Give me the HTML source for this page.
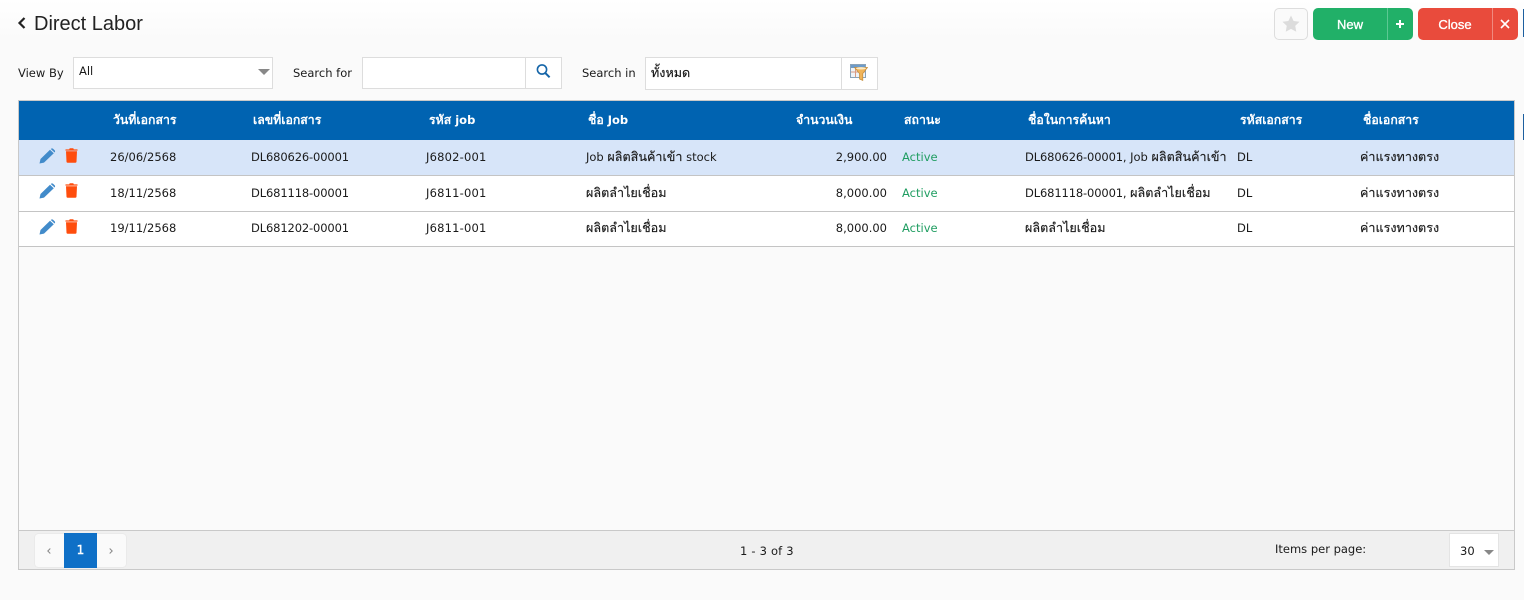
<!DOCTYPE html>
<html lang="th"><head><meta charset="utf-8"><title>Direct Labor</title>
<style>
html,body{margin:0;padding:0;width:1524px;height:600px;overflow:hidden}
body{background:#fafafa;position:relative;font:11.5px "DejaVu Sans","Liberation Sans","Noto Sans CJK SC",sans-serif;color:#1a1a1a}
.a{position:absolute;white-space:nowrap}
.box{position:absolute;box-sizing:border-box;background:#fff;border:1px solid #ddd}
.t{position:absolute;white-space:nowrap;line-height:16px}
.h{color:#fff;font-weight:bold;top:112px}
.row{position:absolute;left:19px;width:1495px;box-sizing:border-box;border-bottom:1px solid #c4c4c4}
.g{color:#1f9d61}
.r{text-align:right}
.th{font-size:12.6px;-webkit-text-stroke:.15px #1a1a1a}
.h .th{font-size:12.3px;-webkit-text-stroke:0}
.tg{letter-spacing:-.14px}
.tj{letter-spacing:.2px}
svg{position:absolute;display:block}
</style></head><body>
<div class="a" style="left:0;top:0;width:1524px;height:40px;background:linear-gradient(#fff,#fafafa)"></div>
<svg style="left:17px;top:16px" width="10" height="14" viewBox="0 0 10 14"><path d="M7.5 2 L2.5 7 L7.5 12" fill="none" stroke="#222" stroke-width="2.2"/></svg>
<div class="a" style="left:34px;top:12px;font:20px/25px 'Liberation Sans',sans-serif;color:#222">Direct Labor</div>

<div class="a" style="left:1274px;top:8px;width:34px;height:32px;box-sizing:border-box;background:#fafafa;border:1px solid #ddd;border-radius:5px"></div>
<svg style="left:1282px;top:15px" width="18" height="17" viewBox="0 0 18 17"><path d="M9 0.5 L11.6 6 L17.5 6.8 L13.2 10.9 L14.3 16.8 L9 13.9 L3.7 16.8 L4.8 10.9 L0.5 6.8 L6.4 6 Z" fill="#dcdcdc"/></svg>
<div class="a" style="left:1313px;top:8px;width:100px;height:32px;background:#21b068;border-radius:5px"></div>
<div class="a" style="left:1387px;top:8px;width:1px;height:32px;background:#5cc893"></div>
<div class="a" style="left:1313px;top:8px;width:74px;height:32px;text-align:center;color:#fff;font:13px/33px 'Liberation Sans',sans-serif;-webkit-text-stroke:.35px #fff">New</div>
<svg style="left:1395px;top:19px" width="10" height="10" viewBox="0 0 10 10"><path d="M5 1 V9 M1 5 H9" stroke="#fff" stroke-width="2"/></svg>
<div class="a" style="left:1418px;top:8px;width:100px;height:32px;background:#e94b3c;border-radius:5px"></div>
<div class="a" style="left:1492px;top:8px;width:1px;height:32px;background:#f08a80"></div>
<div class="a" style="left:1418px;top:8px;width:74px;height:32px;text-align:center;color:#fff;font:13px/33px 'Liberation Sans',sans-serif;-webkit-text-stroke:.35px #fff">Close</div>
<svg style="left:1500px;top:19px" width="10" height="10" viewBox="0 0 10 10"><path d="M1 1 L9 9 M9 1 L1 9" stroke="#fff" stroke-width="1.6"/></svg>
<div class="a" style="left:1523px;top:9px;width:1px;height:28px;background:#1d5f9f"></div>
<div class="a" style="left:1523px;top:114px;width:1px;height:26px;background:#1d5f9f"></div>

<div class="t" style="left:18px;top:65px">View By</div>
<div class="box" style="left:73px;top:57px;width:200px;height:32px"></div>
<div class="t" style="left:79px;top:63px">All</div>
<svg style="left:258px;top:69px" width="12" height="6" viewBox="0 0 12 6"><path d="M0 0 H12 L6 6 Z" fill="#888"/></svg>

<div class="t" style="left:293px;top:65px">Search for</div>
<div class="box" style="left:362px;top:57px;width:200px;height:32px"></div>
<div class="a" style="left:525px;top:58px;width:1px;height:30px;background:#ddd"></div>
<svg style="left:535px;top:63px" width="17" height="17" viewBox="0 0 17 17"><circle cx="7" cy="6.5" r="4.6" fill="none" stroke="#1565a8" stroke-width="1.6"/><path d="M10.3 10 L14.6 14.3" stroke="#1565a8" stroke-width="2"/></svg>

<div class="t" style="left:582px;top:65px">Search in</div>
<div class="box" style="left:645px;top:57px;width:233px;height:33px"></div>
<div class="a" style="left:841px;top:58px;width:1px;height:31px;background:#ddd"></div>
<div class="t th" style="left:651px;top:65px;color:#111">ทั้งหมด</div>
<svg style="left:850px;top:64px" width="18" height="18" viewBox="0 0 18 18"><rect x="0.5" y="0.5" width="15" height="13" fill="#eef3f7" stroke="#8aa3b8"/><rect x="1" y="1" width="14" height="3" fill="#6d9bc9"/><path d="M1 8 H15 M5.5 4 V13" stroke="#d99a80"/><path d="M4.5 3.5 H17.5 L12.8 9.5 V16.5 L9.5 15 V9.5 Z" fill="#f0b45a" stroke="#c48a35" stroke-width=".7"/><ellipse cx="11" cy="4.3" rx="5" ry="1.2" fill="#fbeac4"/></svg>

<!-- grid -->
<div class="a" style="left:18px;top:100px;width:1497px;height:470px;box-sizing:border-box;border:1px solid #c9c9c9;background:#fafafa"></div>
<div class="a" style="left:19px;top:101px;width:1495px;height:39px;background:#0063b1"></div>
<div class="t h" style="left:113px"><span class="th">วันที่เอกสาร</span></div>
<div class="t h" style="left:253px"><span class="th">เลขที่เอกสาร</span></div>
<div class="t h" style="left:429px"><span class="th">รหัส</span> job</div>
<div class="t h" style="left:588px"><span class="th">ชื่อ</span> Job</div>
<div class="t h" style="left:796px"><span class="th">จำนวนเงิน</span></div>
<div class="t h" style="left:904px"><span class="th">สถานะ</span></div>
<div class="t h" style="left:1028px"><span class="th">ชื่อในการค้นหา</span></div>
<div class="t h" style="left:1240px"><span class="th">รหัสเอกสาร</span></div>
<div class="t h" style="left:1363px"><span class="th">ชื่อเอกสาร</span></div>

<div class="row" style="top:140px;height:36px;background:#d7e5f9"></div>
<div class="row" style="top:176px;height:36px;background:#fff"></div>
<div class="row" style="top:212px;height:35px;background:#fff"></div>

<svg style="left:39px;top:148px" width="17" height="16" viewBox="0 0 17 16"><path d="M0.5 15.5 L1.5 11 L11 1.8 L14.8 5.3 L5 14.6 Z M11.8 1 Q13 -0.2 14.2 0.9 L15.6 2.3 Q16.6 3.4 15.6 4.5 Z" fill="#428bca"/></svg>
<svg style="left:65px;top:148px" width="13" height="15" viewBox="0 0 13 15"><path d="M0.5 1.4 H4.2 L4.7 0.3 H8.3 L8.8 1.4 H12.5 V2.6 H0.5 Z M1 3.2 H12 L11.5 13.8 Q11.4 14.8 10.4 14.8 H2.6 Q1.6 14.8 1.5 13.8 Z" fill="#ff4d0d"/></svg>
<svg style="left:39px;top:183px" width="17" height="16" viewBox="0 0 17 16"><path d="M0.5 15.5 L1.5 11 L11 1.8 L14.8 5.3 L5 14.6 Z M11.8 1 Q13 -0.2 14.2 0.9 L15.6 2.3 Q16.6 3.4 15.6 4.5 Z" fill="#428bca"/></svg>
<svg style="left:65px;top:183px" width="13" height="15" viewBox="0 0 13 15"><path d="M0.5 1.4 H4.2 L4.7 0.3 H8.3 L8.8 1.4 H12.5 V2.6 H0.5 Z M1 3.2 H12 L11.5 13.8 Q11.4 14.8 10.4 14.8 H2.6 Q1.6 14.8 1.5 13.8 Z" fill="#ff4d0d"/></svg>
<svg style="left:39px;top:219px" width="17" height="16" viewBox="0 0 17 16"><path d="M0.5 15.5 L1.5 11 L11 1.8 L14.8 5.3 L5 14.6 Z M11.8 1 Q13 -0.2 14.2 0.9 L15.6 2.3 Q16.6 3.4 15.6 4.5 Z" fill="#428bca"/></svg>
<svg style="left:65px;top:219px" width="13" height="15" viewBox="0 0 13 15"><path d="M0.5 1.4 H4.2 L4.7 0.3 H8.3 L8.8 1.4 H12.5 V2.6 H0.5 Z M1 3.2 H12 L11.5 13.8 Q11.4 14.8 10.4 14.8 H2.6 Q1.6 14.8 1.5 13.8 Z" fill="#ff4d0d"/></svg>

<div class="t" style="left:110px;top:149px">26/06/2568</div>
<div class="t tg" style="left:251px;top:149px">DL680626-00001</div>
<div class="t tj" style="left:426px;top:149px">J6802-001</div>
<div class="t" style="left:586px;top:149px">Job <span class="th">ผลิตสินค้าเข้า</span> stock</div>
<div class="t r" style="left:787px;width:100px;top:149px">2,900.00</div>
<div class="t g" style="left:902px;top:149px">Active</div>
<div class="t" style="left:1025px;top:149px;width:204px;overflow:hidden"><span class="tg">DL680626-00001,</span> Job <span class="th">ผลิตสินค้าเข้า</span></div>
<div class="t" style="left:1237px;top:149px">DL</div>
<div class="t th" style="left:1360px;top:149px">ค่าแรงทางตรง</div>

<div class="t" style="left:110px;top:185px">18/11/2568</div>
<div class="t tg" style="left:251px;top:185px">DL681118-00001</div>
<div class="t tj" style="left:426px;top:185px">J6811-001</div>
<div class="t th" style="left:586px;top:185px">ผลิตลำไยเชื่อม</div>
<div class="t r" style="left:787px;width:100px;top:185px">8,000.00</div>
<div class="t g" style="left:902px;top:185px">Active</div>
<div class="t" style="left:1025px;top:185px"><span class="tg">DL681118-00001,</span> <span class="th">ผลิตลำไยเชื่อม</span></div>
<div class="t" style="left:1237px;top:185px">DL</div>
<div class="t th" style="left:1360px;top:185px">ค่าแรงทางตรง</div>

<div class="t" style="left:110px;top:220px">19/11/2568</div>
<div class="t tg" style="left:251px;top:220px">DL681202-00001</div>
<div class="t tj" style="left:426px;top:220px">J6811-001</div>
<div class="t th" style="left:586px;top:220px">ผลิตลำไยเชื่อม</div>
<div class="t r" style="left:787px;width:100px;top:220px">8,000.00</div>
<div class="t g" style="left:902px;top:220px">Active</div>
<div class="t th" style="left:1025px;top:220px">ผลิตลำไยเชื่อม</div>
<div class="t" style="left:1237px;top:220px">DL</div>
<div class="t th" style="left:1360px;top:220px">ค่าแรงทางตรง</div>

<!-- footer -->
<div class="a" style="left:19px;top:530px;width:1495px;height:39px;background:#f0f0f0;border-top:1px solid #c9c9c9;box-sizing:border-box"></div>
<div class="a" style="left:35px;top:534px;width:91px;height:33px;background:#fafafa;border-radius:3px;box-shadow:0 0 1px #ccc"></div>
<div class="a" style="left:64px;top:533px;width:33px;height:35px;background:#0f70c7;color:#fff;text-align:center;font-size:12px;line-height:35px;-webkit-text-stroke:.4px #fff">1</div>
<svg style="left:46px;top:547px" width="6" height="8" viewBox="0 0 6 8"><path d="M4.3 1.5 L1.8 4 L4.3 6.5" fill="none" stroke="#888" stroke-width="1"/></svg>
<svg style="left:108px;top:547px" width="6" height="8" viewBox="0 0 6 8"><path d="M1.7 1.5 L4.2 4 L1.7 6.5" fill="none" stroke="#888" stroke-width="1"/></svg>
<div class="t" style="left:740px;top:543px;letter-spacing:.2px">1 - 3 of 3</div>
<div class="t" style="left:1275px;top:541px">Items per page:</div>
<div class="a" style="left:1449px;top:533px;width:50px;height:34px;background:#fff;box-sizing:border-box;border:1px solid #e4e4e4"></div>
<div class="t" style="left:1460px;top:543px">30</div>
<svg style="left:1484px;top:550px" width="10" height="5" viewBox="0 0 10 5"><path d="M0 0 H10 L5 5 Z" fill="#888"/></svg>
</body></html>
